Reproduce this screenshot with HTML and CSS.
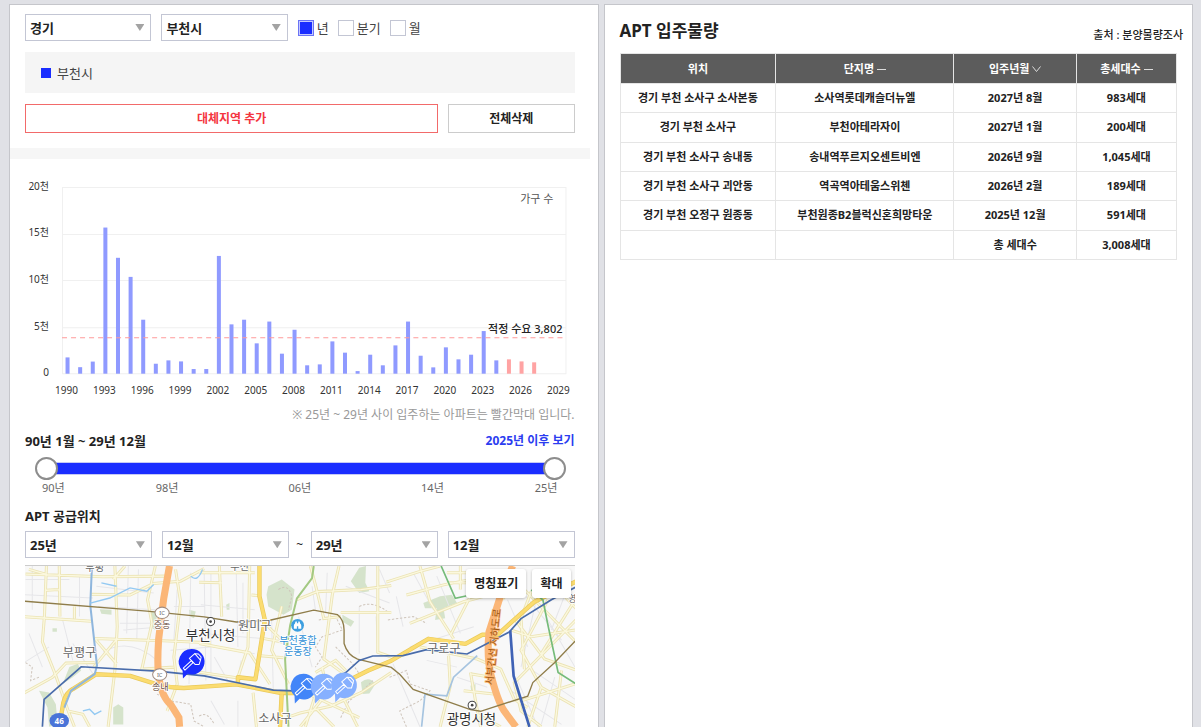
FILE: index.html
```html
<!DOCTYPE html>
<html lang="ko">
<head>
  <meta charset="UTF-8">
  <meta name="viewport" content="width=device-width, initial-scale=1.0">
  <title>APT 입주물량</title>
  <link rel="stylesheet" href="styles.css">
</head>
<body>

  <section class="panel panel-left">
    <form class="filters">
      <span class="select"><select aria-label="시도"><option>경기</option></select></span>
      <span class="select"><select aria-label="시군구"><option>부천시</option></select></span>
      <div class="units">
        <label><input type="checkbox" checked>년</label>
        <label><input type="checkbox">분기</label>
        <label><input type="checkbox">월</label>
      </div>
    </form>

    <div class="legend">부천시</div>

    <div class="actions">
      <button type="button" class="btn btn-add">대체지역 추가</button>
      <button type="button" class="btn btn-clear">전체삭제</button>
    </div>

    <div class="divider"></div>

    <svg class="chart" viewBox="0 0 549 245" role="img" aria-label="연도별 입주 가구 수">
      <g class="grid">
        <path d="M37 28.5H540M37 75.5H540M37 121.5H540M37 168.5H540M37 214.5H540M37.5 28V215M540.5 28V215"/>
      </g>
      <g class="y-axis">
        <text x="24" y="31">20천</text>
        <text x="24" y="77">15천</text>
        <text x="24" y="124">10천</text>
        <text x="24" y="171">5천</text>
        <text x="24" y="217">0</text>
      </g>
      <g id="bars"></g>
      <path class="demand" d="M37 178.5H537"/>
      <g class="x-axis" id="years"></g>
      <text class="note" x="528" y="44">가구 수</text>
      <text class="note strong" x="537" y="174">적정 수요 3,802</text>
    </svg>
    <p class="remark">※ 25년 ~ 29년 사이 입주하는 아파트는 빨간막대 입니다.</p>

    <div class="range-head">
      <h2>90년 1월 ~ 29년 12월</h2>
      <a href="#after">2025년 이후 보기</a>
    </div>
    <div class="range">
      <input type="range" aria-label="시작" min="0" max="100" value="0">
      <input type="range" aria-label="끝" min="0" max="100" value="100">
    </div>
    <div class="ticks">
      <span>90년</span><span>98년</span><span>06년</span><span>14년</span><span>25년</span>
    </div>

    <h2 class="map-title">APT 공급위치</h2>
    <form class="period">
      <span class="select"><select aria-label="시작 년"><option>25년</option></select></span>
      <span class="select"><select aria-label="시작 월"><option>12월</option></select></span>
      <span class="tilde">~</span>
      <span class="select"><select aria-label="끝 년"><option>29년</option></select></span>
      <span class="select"><select aria-label="끝 월"><option>12월</option></select></span>
    </form>

    <div class="map">
      <svg viewBox="0 0 1647 477" preserveAspectRatio="xMidYMin slice" role="img" aria-label="공급위치 지도">
        <defs>
          <g id="pin">
            <path d="M0-38A38 38 0 1 1-12 36L-26 50L-27 27A38 38 0 0 1 0-38Z"/>
            <g fill="none" stroke="#fff" stroke-width="3" stroke-linejoin="round">
              <path d="M-25 19L-1-3L4 3L-20 25Z"/>
              <path d="M-7-10L9-24L26-5L22 8L10 8L-7-10Z"/>
              <path d="M9-24L20-23L28-14L26-5"/>
            </g>
          </g>
          <g id="city">
            <circle r="12" fill="#fff" stroke="#444" stroke-width="3"/>
            <circle r="4" fill="#444"/>
          </g>
          <g id="ic">
            <ellipse rx="21" ry="17" fill="#fff" stroke="#a08c80" stroke-width="3"/>
            <text y="6" class="t-17">IC</text>
          </g>
          <g id="roads">
            <path d="M72 0L66 150L60 225L100 326L135 426L155 477M10 24L240 32L430 30M110 0L112 150M0 150L205 164M275 0L282 180L275 310L255 477M215 215L420 222L560 228M215 215L280 290M280 218L212 300M205 84L320 86L390 52L470 45L540 8M395 0L372 100L385 170L355 306M0 380L90 330L130 288L215 286M135 430L180 440L200 477M305 0L270 40M70 72L110 70M70 24L20 10M155 120V156M455 10L470 106L450 270L460 350L430 430M350 306L450 300"/>
            <path d="M585 0L592 150M675 0L670 240L640 330M525 48L592 50M525 20H690M525 230L675 258L735 350M680 86L704 88M710 214L775 226M705 266L775 272M525 315L640 332M720 170L790 240M815 100L875 76L1005 70L1095 58M940 0L920 86L895 276L955 320M855 0L870 56L895 156L945 150M945 138H1095M1055 0V256L1095 270M685 376L695 477M795 446L825 436L915 416L1005 376L1095 316M825 477L905 376L890 300M955 396L995 477M875 426L925 477M770 120L740 250L790 350M870 316L930 280L960 310M850 380L1000 450M880 350L840 477"/>
            <path d="M1080 48L1180 16L1240 0M1180 0L1210 106L1280 216M1140 86L1250 56L1350 36M1150 170L1310 106L1370 90M1265 266L1270 356L1240 477M1340 70L1270 206M1180 240L1350 276L1420 306L1460 396L1500 420M1330 320L1390 330M1330 316L1345 400L1360 477M1310 370L1400 380M1260 20H1350M1260 50H1350M1300 0V70M1350 440L1420 477"/>
            <path d="M1460 156L1550 276L1647 310M1510 76L1480 156L1490 306M1647 156L1460 346L1480 430L1540 477M1480 60L1647 230M1560 100L1480 250L1540 360L1647 420M1600 80L1647 130M1430 100L1400 60M1540 360L1500 477M1480 400L1640 350M1600 310L1580 477M1450 190L1510 210L1640 190M1647 90L1540 260"/>
          </g>
          <path id="trunk" d="M110 477L122 406Q130 375 150 365L220 321L320 326L400 351Q440 362 480 362L540 358L635 351L765 376L840 378M955 346L1025 311L1095 281L1205 216L1315 231L1365 204L1410 204L1480 141L1520 106L1647 44M704 0V90L720 160L692 336L640 330V350M770 376L765 477"/>
        </defs>

        <rect width="1647" height="477" fill="#f8f8f8"/>

        <g class="park">
          <path d="M730 60L770 40L808 70L800 130L775 145L730 120L725 85Z"/>
          <path d="M975 45L1000 5L1020 0L1018 50L1030 75L1000 80Z"/>
          <path d="M1190 110L1240 90L1275 85L1290 110L1250 125L1255 155L1225 160L1230 125L1195 125Z"/>
          <path d="M50 370L80 375L100 410L105 470L80 477L75 420Z"/>
          <path d="M140 300L165 290L175 310L150 330L120 350Z"/>
          <path d="M1005 345Q1030 325 1048 350L1030 378L1010 380Z"/>
          <path d="M380 135L400 140L395 190L380 180Z"/>
          <path d="M950 145L985 165L975 180L950 165Z"/>
          <path d="M90 185H103V195H90ZM495 130L515 135L510 155L497 150ZM270 420L285 410L300 420V470H270ZM605 115L615 110V130H607ZM1330 355L1345 350V368L1332 370ZM230 128L265 130V145L235 142Z"/>
        </g>

        <g class="lane">
          <path d="M10 40H140M0 85L210 95M30 0V130M170 30V150M315 0L310 200M345 10L340 220M220 60L390 80M225 120L395 130M290 170H400M300 190L420 180M240 255Q320 210 400 280M150 230L210 320M0 290L80 240M20 200L60 300M120 160L150 280M460 70L450 220M500 20L495 350M450 120H540M440 250L560 240M540 20L545 340"/>
          <path d="M560 20V330M635 10L640 240M655 50V200M530 115L690 130M530 200L710 215M540 235L690 260M570 270L610 340M650 280L640 330M740 160L745 370M860 60L870 130M905 20L900 140M1000 120V260M1050 150L1055 260M960 60L1090 110M1060 10L1090 80M560 400L600 470M640 400V477M820 150L860 300"/>
          <path d="M1110 90L1130 180M1160 20L1220 130M1230 30L1300 200M1150 240L1340 180M1100 290L1180 477M1200 280L1290 300M1290 330L1380 360M1400 10L1390 80M1440 100L1500 240M1470 60L1600 220M1530 80L1480 300M1560 160L1640 300M1450 370L1600 470M1500 300L1647 400M1470 340L1530 477M1580 330L1540 470M1620 60L1570 190"/>
        </g>

        <g class="trail">
          <path d="M0 280L30 300L25 340L50 330M400 380L440 400L500 410L510 460L540 477M760 70Q790 50 800 90L790 130M880 160L930 150L950 190L890 210L870 240L890 270L870 300M1000 120Q1040 100 1090 140M930 240L980 290L1000 320M1090 330L1140 310L1150 350L1210 370L1180 400L1120 430L1140 477M945 450L970 400L1010 370L1040 340M525 445Q550 430 570 470M1085 160L1160 150L1200 170"/>
        </g>

        <use href="#roads" class="road-case"/>
        <use href="#roads" class="road-fill"/>
        <use href="#trunk" class="trunk-case"/>
        <use href="#trunk" class="trunk-fill"/>

        <g fill="none">
          <path class="highway" d="M437 0L420 96L405 216Q400 290 405 330Q415 390 440 410L465 450L467 477"/>
          <path class="highway" d="M1455 0L1420 86L1385 196Q1378 270 1390 320Q1410 400 1430 430L1465 477"/>
          <path stroke="#8fb6dd" stroke-width="6" d="M207 0L202 116L222 296L215 321L145 370L125 420"/>
          <path stroke="#93c9f2" stroke-width="4" d="M202 110L260 95L320 65L370 75L390 55M235 50L280 60M500 30Q520 50 535 10M180 430L200 425L215 440L235 430"/>
          <path stroke="#a6c4e0" stroke-width="5" d="M1185 477L1195 380L1260 385L1280 330L1350 266"/>
          <path stroke="#a3c982" stroke-width="6" d="M865 0L860 36L815 96L795 176L780 276L785 376L790 477"/>
          <path stroke="#75bb79" stroke-width="5" d="M1243 0L1285 96L1330 86M1510 71L1545 101L1560 176L1590 316L1647 352"/>
          <path stroke="#8f7d4a" stroke-width="4" d="M0 104L370 134L540 151L635 166L735 161L865 131L935 144Q955 160 955 190V230Q965 265 995 276L1095 301L1120 321L1160 366L1330 426L1360 431L1500 386L1515 346L1580 286L1647 216"/>
          <path stroke="#496cab" stroke-width="5" d="M60 477L65 396L175 299L400 312L540 326L745 368L830 371M940 330L960 316L1000 280L1040 267L1130 266L1200 248L1320 261L1445 196L1480 156L1570 100L1647 60"/>
          <path stroke="#3f62b5" stroke-width="8" d="M1448 192L1458 326L1505 477"/>
        </g>

        <g class="places">
          <text x="215" y="14" class="t-30">부평</text>
          <text x="645" y="12" class="t-30">부천</text>
          <text x="170" y="269">부평구</text>
          <use href="#ic" x="415" y="139"/>
          <text x="415" y="185" class="t-27 brown">중동</text>
          <use href="#ic" x="408" y="322"/>
          <text x="410" y="367" class="t-27 brown">송내</text>
          <use href="#city" x="559" y="165"/>
          <text x="559" y="219" class="t-40 dark">부천시청</text>
          <text x="690" y="190">원미구</text>
          <text class="t-30 blue"><tspan x="818" y="230">부천종합</tspan><tspan x="818" y="264">운동장</tspan></text>
          <text x="750" y="466">소사구</text>
          <text x="1251" y="259">구로구</text>
          <use href="#city" x="1335" y="413"/>
          <text x="1333" y="470" class="t-40 dark">광명시청</text>
          <text x="1632" y="108" class="t-27">영</text>
          <text class="t-30 tunnel" transform="translate(1408 241) rotate(-84)">서부간선 지하도로</text>
        </g>

        <circle cx="817" cy="176" r="19" fill="#3d9fe0"/>
        <path fill="#fff" d="M806 186V177Q806 172 809 171L811 165H815V170H819V165H823L825 171Q828 172 828 177V186H819V179H815V186Z"/>

        <ellipse cx="110" cy="459" rx="29" ry="23" fill="#4a74d8"/>
        <text x="110" y="468" class="t-24 route">46</text>

        <use href="#pin" x="503" y="284" fill="#1a2dff"/>
        <use href="#pin" x="835" y="358" fill="#4285f8"/>
        <use href="#pin" x="895" y="358" fill="#86b0ff"/>
        <use href="#pin" x="955" y="354" fill="#86b0ff"/>
      </svg>
      <div class="map-tools">
        <button type="button">명칭표기</button>
        <button type="button">확대</button>
      </div>
    </div>
  </section>

  <section class="panel panel-right">
    <header>
      <h1>APT 입주물량</h1>
      <span class="source">출처 : 분양물량조사</span>
    </header>
    <table>
      <colgroup><col class="c-loc"><col class="c-name"><col class="c-date"><col class="c-count"></colgroup>
      <thead>
        <tr>
          <th>위치</th>
          <th><button type="button">단지명 <svg width="9" height="8" viewBox="0 0 9 8"><path d="M0 4.5H9"/></svg></button></th>
          <th><button type="button">입주년월 <svg width="9" height="8" viewBox="0 0 9 8"><path d="M.5 1.5L4.5 6.5L8.5 1.5"/></svg></button></th>
          <th><button type="button">총세대수 <svg width="9" height="8" viewBox="0 0 9 8"><path d="M0 4.5H9"/></svg></button></th>
        </tr>
      </thead>
      <tbody>
        <tr><td>경기 부천 소사구 소사본동</td><td>소사역롯데캐슬더뉴엘</td><td>2027년 8월</td><td>983세대</td></tr>
        <tr><td>경기 부천 소사구</td><td>부천아테라자이</td><td>2027년 1월</td><td>200세대</td></tr>
        <tr><td>경기 부천 소사구 송내동</td><td>송내역푸르지오센트비엔</td><td>2026년 9월</td><td>1,045세대</td></tr>
        <tr><td>경기 부천 소사구 괴안동</td><td>역곡역아테움스위첸</td><td>2026년 2월</td><td>189세대</td></tr>
        <tr><td>경기 부천 오정구 원종동</td><td>부천원종B2블럭신혼희망타운</td><td>2025년 12월</td><td>591세대</td></tr>
        <tr><td></td><td></td><td>총 세대수</td><td>3,008세대</td></tr>
      </tbody>
    </table>
  </section>

  <script src="chart.js"></script>
</body>
</html>
```

FILE: styles.css
```css
* {
  box-sizing: border-box;
}
body {
  margin: 0;
  height: 100vh;
  padding: 4px 8px 0 9px;
  display: grid;
  grid-template-columns: minmax(0, 1fr) minmax(0, 1fr);
  grid-template-rows: minmax(0, 1fr);
  gap: 5px;
  overflow: hidden;
  background: #e0e1e6;
  color: #222;
  font: 12px/16px "Noto Sans", "Noto Sans CJK KR", sans-serif;
}
h1, h2, p {
  margin: 0;
}
h2 {
  font-size: 13px;
  line-height: 20px;
}
button, select {
  font: inherit;
  color: inherit;
}
form {
  margin: 0;
}

.panel {
  background: #fff;
  border: 1px solid #c5c6cb;
  border-bottom: 0;
}
.panel-left {
  display: flex;
  flex-direction: column;
  padding: 9px 23px 0 15px;
}

/* selects */
.select {
  display: grid;
  flex: 1;
}
.select select {
  grid-area: 1 / 1;
  appearance: none;
  width: 100%;
  height: 27px;
  padding: 0 4px;
  border: 1px solid #c3c6d4;
  border-radius: 0;
  background: #fff;
  font-size: 13px;
  font-weight: bold;
}
.select::after {
  content: '';
  grid-area: 1 / 1;
  place-self: center end;
  width: 9px;
  height: 7px;
  margin-right: 7px;
  background: #a3a3a3;
  clip-path: polygon(0 0, 100% 0, 50% 100%);
  pointer-events: none;
}
.filters {
  display: flex;
  align-items: center;
  gap: 10px;
}
.filters .select {
  flex: 0 0 23%;
}
.units {
  display: flex;
  gap: 9px;
  font-size: 13px;
  color: #444;
}
.units label {
  display: flex;
  align-items: center;
  gap: 3px;
}
.units input {
  appearance: none;
  width: 16px;
  height: 16px;
  margin: 0;
  border: 1px solid #c3c6d4;
}
.units input:checked {
  border-color: #6b74f5;
  background: #1a2dff;
  box-shadow: inset 0 0 0 1px #c5c9ff;
}

.legend {
  display: flex;
  align-items: center;
  gap: 6px;
  height: 41px;
  margin-top: 11px;
  padding-left: 16px;
  background: #f5f5f5;
  color: #444;
  font-size: 13px;
}
.legend::before {
  content: '';
  width: 10px;
  height: 10px;
  background: #1a2dff;
}

.actions {
  display: flex;
  gap: 10px;
  margin-top: 11px;
}
.btn {
  height: 29px;
  padding: 0;
  border: 1px solid #ccc;
  background: #fff;
  font-weight: bold;
}
.btn-add {
  flex: 1;
  border-color: #f26a6a;
  color: #f43540;
}
.btn-clear {
  flex: 0 0 23%;
}
.divider {
  height: 11px;
  margin: 15px -15px 0;
  background: #f6f6f6;
}

/* chart */
.chart {
  display: block;
  width: 100%;
  font-size: 10px;
}
.chart text {
  fill: #333;
}
.grid path {
  fill: none;
  stroke: #f0f0f0;
}
.y-axis text, .chart .note {
  text-anchor: end;
}
.x-axis text {
  text-anchor: middle;
}
.chart .note {
  font-size: 11px;
  fill: #555;
}
.chart .strong {
  font-weight: 500;
  fill: #222;
}
.bar {
  fill: #8f9aff;
}
.bar.planned {
  fill: #ffa3a3;
}
.demand {
  stroke: #ff9a9a;
  stroke-dasharray: 5 4;
}
.remark {
  margin-top: 3px;
  color: #999;
  text-align: right;
}

/* period slider */
.range-head {
  display: flex;
  align-items: center;
  justify-content: space-between;
  margin-top: 8px;
}
.range-head a {
  color: #2b3cf0;
  font-weight: bold;
  text-decoration: none;
}
.range {
  display: grid;
  align-items: center;
  margin: 6px 9px 0 10px;
}
.range::before {
  content: '';
  grid-area: 1 / 1;
  height: 11px;
  margin: 0 11px;
  border: 1px solid #c5c9f5;
  border-width: 1px 0;
  background: #1a2dff;
}
.range input {
  grid-area: 1 / 1;
  appearance: none;
  width: 100%;
  height: 23px;
  margin: 0;
  background: none;
  pointer-events: none;
}
.range input::-webkit-slider-thumb {
  appearance: none;
  width: 23px;
  height: 23px;
  border: 2px solid #8d8d8d;
  border-radius: 50%;
  background: #fff;
  pointer-events: auto;
}
.ticks {
  display: grid;
  grid-template-columns: 6fr 7fr 7fr 6fr auto;
  padding: 0 17px;
  color: #666;
  font-size: 11px;
}
.map-title {
  margin-top: 10px;
}
.period {
  display: flex;
  align-items: center;
  margin-top: 5px;
}
.period .select + .select {
  margin-left: 10px;
}
.tilde {
  width: 22px;
  text-align: center;
}

/* map */
.map {
  position: relative;
  flex: 1;
  min-height: 0;
  margin-top: 7px;
  border-top: 1px solid #ccc;
}
.map > svg {
  display: block;
  width: 100%;
  height: 100%;
}
.park {
  fill: #d5e3cb;
}
.lane path {
  fill: none;
  stroke: #e6e6e9;
  stroke-width: 3;
}
.trail path {
  fill: none;
  stroke: #cfc5bb;
  stroke-width: 3;
  stroke-dasharray: 7 5;
}
.road-case, .road-fill {
  fill: none;
  stroke: #ebe3b4;
  stroke-width: 9;
}
.road-fill {
  stroke: #fbf8de;
  stroke-width: 4;
}
.trunk-case, .trunk-fill {
  fill: none;
  stroke: #e9c95a;
  stroke-width: 13;
  stroke-linejoin: round;
}
.trunk-fill {
  stroke: #fbdc70;
  stroke-width: 9;
}
.highway {
  stroke: #fbb677;
  stroke-width: 21;
}
.map text {
  fill: #666;
  font-size: 36px;
  text-anchor: middle;
  stroke: #fff;
  stroke-width: 5px;
  stroke-linejoin: round;
  paint-order: stroke;
}
.map .t-17 { font-size: 17px; }
.map .t-24 { font-size: 24px; }
.map .t-27 { font-size: 27px; }
.map .t-30 { font-size: 30px; }
.map .t-40 { font-size: 40px; }
.map .brown {
  fill: #6b4c40;
}
.map .dark {
  fill: #333;
}
.map .blue {
  fill: #2f8fd6;
}
.map .tunnel {
  fill: #a0560f;
  stroke: #fbb677;
}
.map .route {
  fill: #fff;
  stroke: none;
  font-weight: bold;
}
.map-tools {
  position: absolute;
  top: 3px;
  right: 4px;
  display: flex;
  gap: 6px;
}
.map-tools button {
  height: 29px;
  padding: 0 8px;
  border: 0;
  border-radius: 3px;
  background: #fff;
  box-shadow: 0 1px 3px rgba(0, 0, 0, .25);
  font-weight: bold;
}

/* move-in table */
.panel-right {
  padding: 15px 15px 0;
}
.panel-right header {
  display: flex;
  justify-content: space-between;
  align-items: flex-end;
  height: 23px;
  margin-right: -6px;
}
h1 {
  font-size: 17px;
  line-height: 24px;
}
.source {
  font-size: 11px;
  font-weight: 500;
  line-height: 16px;
}
table {
  width: 100%;
  height: 207px;
  margin-top: 10px;
  border-collapse: collapse;
  table-layout: fixed;
  font-size: 11px;
  font-weight: bold;
  text-align: center;
}
.c-loc { width: 28%; }
.c-name { width: 32%; }
.c-date { width: 22%; }
.c-count { width: 18%; }
th, td {
  padding: 0;
  border: 1px solid #e5e5e5;
}
th {
  height: 30px;
  background: #5c5c5c;
  color: #fff;
}
th button {
  padding: 0;
  border: 0;
  background: none;
}
th svg {
  fill: none;
  stroke: #ddd;
}
```

FILE: chart.js
```javascript
const FIRST_YEAR = 1990;
const households = [
  1750, 700, 1300, 15700, 12450, 10400, 5800, 1070, 1430, 1320,
  500, 500, 12650, 5300, 5800, 3260, 5600, 2150, 4720, 900,
  1000, 3470, 2260, 280, 2040, 900, 3040, 5600, 1930, 680,
  2830, 1540, 2040, 4580, 1430, 1540, 1320, 1220, 0, 0
];

const BASE = 214.5;
const SCALE = 186 / 20000;
const STEP = 12.6;

function add(parent, tag, attrs, text) {
  const el = document.createElementNS(parent.namespaceURI, tag);
  for (const key in attrs) el.setAttribute(key, attrs[key]);
  if (text) el.textContent = text;
  parent.appendChild(el);
}

const bars = document.getElementById('bars');
const years = document.getElementById('years');

households.forEach((count, i) => {
  const year = FIRST_YEAR + i;
  const x = 42.5 + i * STEP;
  if (count) {
    const h = count * SCALE;
    add(bars, 'rect', {
      class: year >= 2025 ? 'bar planned' : 'bar',
      x: x - 2, y: BASE - h, width: 4, height: h
    });
  }
  if (i % 3 === 0) add(years, 'text', { x: x - 1, y: 235 }, String(year));
});
```
